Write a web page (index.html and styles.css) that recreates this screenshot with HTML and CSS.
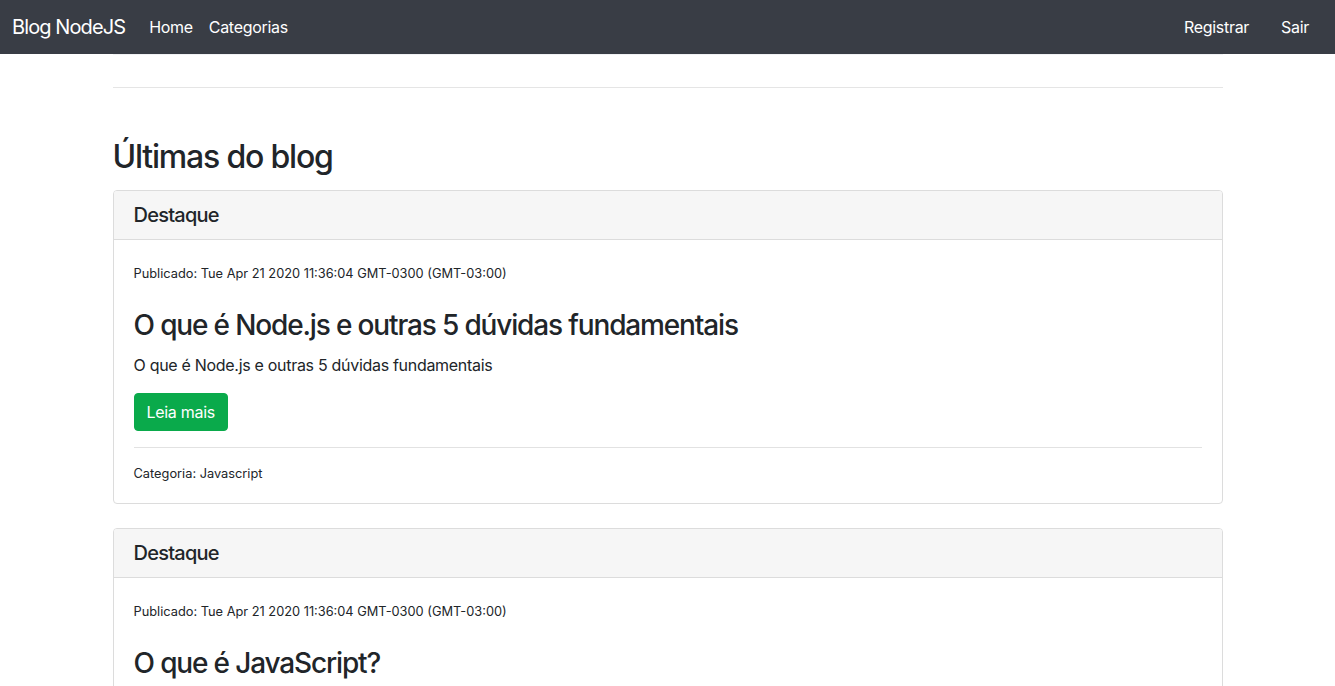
FILE: index.html
```html
<!DOCTYPE html>
<html lang="pt-BR">
<head>
<meta charset="utf-8">
<title>Blog NodeJS</title>
<link rel="stylesheet" href="styles.css">
</head>
<body>
<nav class="navbar">
  <a class="brand" href="#">Blog NodeJS</a>
  <ul class="nav">
    <li><a class="nav-link" href="#">Home</a></li>
    <li><a class="nav-link" href="#">Categorias</a></li>
  </ul>
  <ul class="nav nav-right">
    <li><a class="nav-link" href="#">Registrar</a></li>
    <li><a class="nav-link" href="#">Sair</a></li>
  </ul>
</nav>

<main class="container">
  <div class="top-rule"></div>
  <hr class="rule">
  <h2 class="page-title">Últimas do blog</h2>

  <article class="card">
    <div class="card-header"><h5>Destaque</h5></div>
    <div class="card-body">
      <p class="date"><small>Publicado: Tue Apr 21 2020 11:36:04 GMT-0300 (GMT-03:00)</small></p>
      <h3 class="card-title">O que é Node.js e outras 5 dúvidas fundamentais</h3>
      <p class="card-text">O que é Node.js e outras 5 dúvidas fundamentais</p>
      <a class="btn" href="#">Leia mais</a>
      <hr class="card-rule">
      <small class="category">Categoria: Javascript</small>
    </div>
  </article>

  <article class="card">
    <div class="card-header"><h5>Destaque</h5></div>
    <div class="card-body">
      <p class="date"><small>Publicado: Tue Apr 21 2020 11:36:04 GMT-0300 (GMT-03:00)</small></p>
      <h3 class="card-title">O que é JavaScript?</h3>
      <p class="card-text">O que é JavaScript?</p>
      <a class="btn" href="#">Leia mais</a>
      <hr class="card-rule">
      <small class="category">Categoria: Javascript</small>
    </div>
  </article>
</main>
</body>
</html>
```

FILE: styles.css
```css
* { box-sizing: border-box; }

html, body {
  margin: 0;
  padding: 0;
}

body {
  font-family: Inter, "Noto Sans", "Liberation Sans", sans-serif;
  font-size: 16px;
  line-height: 1.5;
  letter-spacing: -0.3px;
  color: #212529;
  background: #fff;
}

a { text-decoration: none; }

.navbar {
  display: flex;
  align-items: center;
  height: 54px;
  padding: 0 10px 0 12px;
  background: #393d45;
}

.brand {
  font-size: 20px;
  line-height: 30px;
  color: #fff;
  margin-right: 16px;
  letter-spacing: -0.9px;
}

.nav {
  display: flex;
  list-style: none;
  margin: 0;
  padding: 0;
}

.nav-right {
  margin-left: auto;
}

.nav-link {
  display: block;
  padding: 8px 8px;
  color: #fff;
  font-size: 16px;
  line-height: 24px;
}

.nav-right .nav-link {
  padding: 8px 16px;
}

.container {
  max-width: 1110px;
  margin: 0 auto;
}

.top-rule {
  height: 1px;
  background: #f1f2f4;
}

.rule {
  margin: 32px 0 0;
  border: 0;
  border-top: 1px solid #e5e5e5;
}

.page-title {
  margin: 50px 0 14px;
  font-size: 32px;
  line-height: 1.2;
  font-weight: 500;
  letter-spacing: -1.2px;
}

.card {
  border: 1px solid #dcdcdc;
  border-radius: 4px;
  margin-bottom: 24px;
  overflow: hidden;
}

.card-header {
  background: #f6f6f6;
  border-bottom: 1px solid #dcdcdc;
  padding: 12px 20px;
}

.card-header h5 {
  margin: 0;
  font-size: 20px;
  line-height: 24px;
  font-weight: 500;
  letter-spacing: -0.75px;
}

.card-body {
  padding: 20px;
}

.date {
  margin: 0 0 25px;
}

.date small,
.category {
  font-size: 12.8px;
  letter-spacing: 0;
}

.card-title {
  margin: 0 0 10px;
  font-size: 28px;
  line-height: 1.2;
  font-weight: 500;
  letter-spacing: -1.15px;
}

.card-text {
  margin: 0 0 16px;
}

.btn {
  display: inline-block;
  padding: 6px 12px;
  border: 1px solid #0aaa4b;
  border-radius: 4px;
  background: #0aaa4b;
  color: #fff;
  font-size: 16px;
  line-height: 24px;
}

.card-rule {
  margin: 16px 0;
  border: 0;
  border-top: 1px solid #e2e2e2;
}

.category {
  display: block;
  line-height: 1.5;
}
```
